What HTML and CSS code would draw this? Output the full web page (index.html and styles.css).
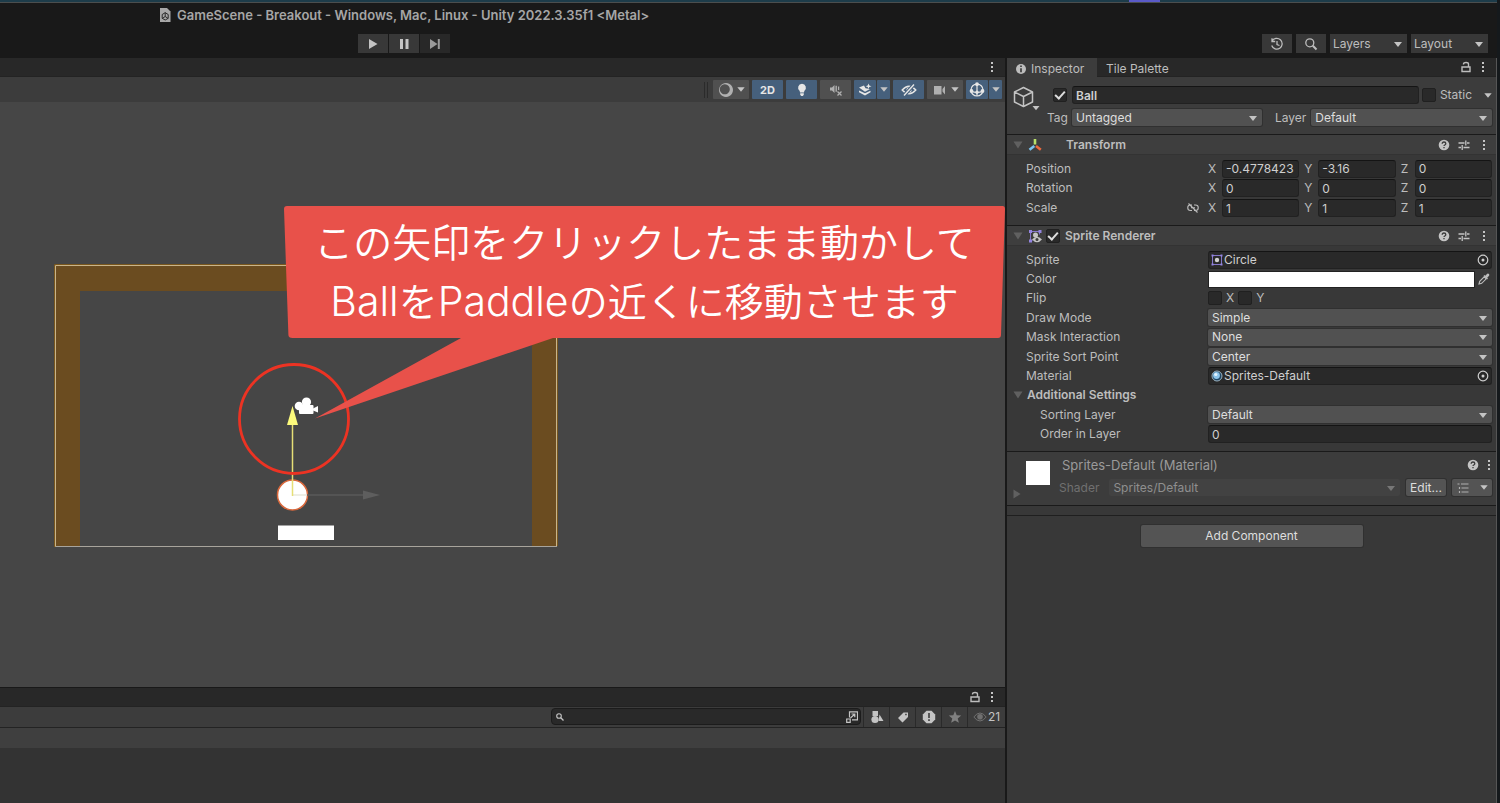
FILE: index.html
```html
<!DOCTYPE html>
<html lang="ja">
<head>
<meta charset="utf-8">
<title>GameScene - Breakout</title>
<link rel="stylesheet" href="styles.css">
</head>
<body>
<svg class="defs" aria-hidden="true">
  <symbol id="dots" viewBox="0 0 4 12"><rect x="1" y="1" width="2" height="2"/><rect x="1" y="5" width="2" height="2"/><rect x="1" y="9" width="2" height="2"/></symbol>
  <symbol id="lock" viewBox="0 0 10 12"><path d="M1 6h8v4.500h-8zM2.500 3.500v-.5q0-1.500 2.500-1.500t2.500 1.500v3" fill="none" stroke="currentColor" stroke-width="1.400"/></symbol>
  <symbol id="help" viewBox="0 0 12 12"><circle cx="6" cy="6" r="5.300"/><path d="M4.200 4.800q0-1.800 1.800-1.800t1.800 1.600q0 .9-1 1.400-.8.400-.8 1.100M6 8v1.300" fill="none" stroke="#3c3c3c" stroke-width="1.300"/></symbol>
  <symbol id="preset" viewBox="0 0 12 12"><path d="M.5 4h6M9 4h2.500M7.800 1.500v5M.5 8.500h2.500M5.500 8.500h6M4.200 6v5" fill="none" stroke="currentColor" stroke-width="1.300"/></symbol>
  <symbol id="target" viewBox="0 0 12 12"><circle cx="6" cy="6" r="4.800" fill="none" stroke="currentColor" stroke-width="1.200"/><circle cx="6" cy="6" r="1.500"/></symbol>
  <symbol id="tri" viewBox="0 0 8 5"><path d="M.3.2h7.400L4 4.800z"/></symbol>
  <symbol id="fold" viewBox="0 0 10 8"><path d="M.5.500h9L5 7.500z"/></symbol>
</svg>
<div class="app">
  <div class="desktop"><i></i></div>
  <header class="titlebar">
    <svg class="doc" viewBox="0 0 12 14"><path d="M1 0h7l3.500 3.500V14H1z" fill="#a8a8a8"/><path d="M6.200 4.500v4M6.200 8.500l-3 2M6.200 8.500l3 2M3.200 6.500v3.800l3 1.700 3-1.700V6.500l-3-1.800z" fill="none" stroke="#2a2a2a"/></svg>
    <h1>GameScene - Breakout - Windows, Mac, Linux - Unity 2022.3.35f1 &lt;Metal&gt;</h1>
  </header>
  <nav class="topbar">
    <div class="play">
      <button aria-label="Play"><svg viewBox="0 0 14 12"><path d="M3 1l8.500 5L3 11z"/></svg></button>
      <button aria-label="Pause"><svg viewBox="0 0 14 12"><path d="M3 1h3v10H3zM8.500 1h3v10h-3z"/></svg></button>
      <button aria-label="Step" class="dim"><svg viewBox="0 0 14 12"><path d="M2 1l7.500 5L2 11zM9.800 1h2v10h-2z"/></svg></button>
    </div>
    <div class="global">
      <button aria-label="History"><svg viewBox="0 0 14 14"><path d="M2 4.200A5.400 5.400 0 1 1 1.700 8.500M2 1.300v3.200h3.200M7 4v3.500l2.500 1" fill="none" stroke="currentColor" stroke-width="1.300"/></svg></button>
      <button aria-label="Search"><svg viewBox="0 0 14 14"><circle cx="5.800" cy="5.800" r="4" fill="none" stroke="currentColor" stroke-width="1.300"/><path d="M8.800 8.800l3.700 3.700" stroke="currentColor" stroke-width="2"/></svg></button>
      <span class="sel"><select aria-label="Layers"><option>Layers</option></select></span>
      <span class="sel"><select aria-label="Layout"><option>Layout</option></select></span>
    </div>
  </nav>
  <div class="workspace">
    <main class="left">
      <section class="scene-panel">
        <div class="tabs"><button class="ic end" aria-label="Scene menu"><svg class="dots"><use href="#dots"/></svg></button></div>
        <div class="scene-tools">
          <span class="grip"></span>
          <button class="w34" aria-label="Draw mode"><svg class="i16" viewBox="0 0 16 16"><path d="M8 1a7 7 0 1 0 .01 0M6.800 2.300a5 5 0 1 1-.01 0" fill-rule="evenodd"/></svg><svg class="tri"><use href="#tri"/></svg></button>
          <button class="on w31 two">2D</button>
          <button class="on w31" aria-label="Lighting"><svg class="i14" viewBox="0 0 14 14"><path d="M7 .8a4 4 0 0 1 2.300 7.200L9 9.500H5L4.700 8A4 4 0 0 1 7 .8zM5.200 10.200h3.600v1.500L7.800 13H6.200l-1-1.300z"/></svg></button>
          <button class="w31" aria-label="Audio"><svg class="i14" viewBox="0 0 14 14"><path d="M1 4.500h2L5.500 2v8L3 7.500H1zM6.500 2.800h1.400v6H6.500zM9 3.500h1.200V7H9z"/><path d="M8.500 8.500l4 4M12.500 8.500l-4 4" stroke="currentColor" stroke-width="1.300"/></svg></button>
          <span class="pair"><button class="on w22" aria-label="Effects"><svg class="i14" viewBox="0 0 14 14"><path d="M1 4.500l5-2 1.500 2.800 4.500.7-5 2.700zM1 7.500l6 2.800 5.500-2.600v1.600L7 12.500 1 9.300zM10.500.5l.8 2 2.200.7-2.200.8-.8 2-.8-2-2-.8 2-.7z"/></svg></button><button class="on w14" aria-label="Effects menu"><svg class="tri"><use href="#tri"/></svg></button></span>
          <button class="on w31" aria-label="Hidden objects"><svg class="i16" viewBox="0 0 16 14"><path d="M1.200 7Q8-.5 14.800 7 8 14.500 1.200 7z" fill="none" stroke="currentColor" stroke-width="1.400"/><circle cx="8" cy="7" r="2.600"/><path d="M3 12.500L13 1.500" stroke="#46607c" stroke-width="3.500"/><path d="M3 12.500L13 1.500" stroke="currentColor" stroke-width="1.400"/></svg></button>
          <button class="w34" aria-label="Camera"><svg class="i16" viewBox="0 0 16 14"><path d="M2 3h7.500v8.500H2zM10.500 6l2.500-3v8.500l-2.500-3z"/></svg><svg class="tri"><use href="#tri"/></svg></button>
          <span class="pair"><button class="on w22" aria-label="Gizmos"><svg class="i16" viewBox="0 0 16 16"><circle cx="8" cy="8" r="6" fill="none" stroke="currentColor" stroke-width="1.200"/><path d="M8 2v12M2 9q6 3 12 0" fill="none" stroke="currentColor" stroke-width="1.200"/><circle cx="8" cy="2.200" r="1.900"/><circle cx="2.500" cy="9" r="1.900"/><circle cx="13.500" cy="9" r="1.900"/><circle cx="8" cy="10.300" r="1.700"/></svg></button><button class="on w14" aria-label="Gizmos menu"><svg class="tri"><use href="#tri"/></svg></button></span>
        </div>
        <div class="canvas">
          <svg class="art" width="1005" height="585" viewBox="0 102 1005 585">
            <path d="M54 265h503v282h-25V291H80v256H54z" fill="#6b4c20"/>
            <path d="M55.500 546.500V265.500h501v281z" fill="none" stroke="#c9b489"/>
            <path d="M54.500 547V264.500h503V546" fill="none" stroke="#79571e"/>
            <path d="M56 546.500h501" stroke="#a8a49c"/>
            <circle cx="292.500" cy="495" r="15" fill="#fff" stroke="#d9683c" stroke-width="1.500"/>
            <path d="M307 495h56" stroke="#5a5a5a" stroke-width="1.500"/><path d="M292.500 495h14" stroke="#e8e8dc" stroke-width="1.500"/>
            <path d="M363 490.500l17 4.500-17 4.500z" fill="#5e5e5e"/>
            <path d="M292.500 496v-72" stroke="#e6df76" stroke-width="1.500"/>
            <path d="M292.500 406l5.500 19h-11z" fill="#fcfa7c"/>
            <rect x="278" y="525.500" width="56" height="14.500" fill="#fff"/>
            <circle cx="294" cy="419" r="54.500" fill="none" stroke="#ec3323" stroke-width="2.800"/>
            <g fill="#fff"><circle cx="299" cy="406" r="4.300"/><circle cx="306.500" cy="402" r="4.600"/><rect x="299" y="405" width="14.500" height="9" rx="1"/><path d="M313 408.500l5-2.500v6.500l-5-2z"/></g>
            <path d="M286.500 206H1002.500Q1005 206 1005 209L1001 335Q1000.900 338 998 338H553L315 418.500 461 338H292.500Q288.500 338 288.400 335L284 209Q284 206 287 206z" fill="#e8514a"/>
          </svg>
          <p class="callout">この矢印をクリックしたまま動かして<br><span>Ball</span>を<span>Paddle</span>の近くに移動させます</p>
        </div>
      </section>
      <section class="project">
        <div class="tabs"><button class="ic end" aria-label="Lock"><svg class="lock"><use href="#lock"/></svg></button><button class="ic" aria-label="Project menu"><svg class="dots"><use href="#dots"/></svg></button></div>
        <div class="project-tools">
          <label class="search"><svg viewBox="0 0 10 10"><circle cx="4" cy="4" r="2.300" fill="none" stroke="currentColor" stroke-width="1.100"/><path d="M5.800 5.800L8.500 8.500" stroke="currentColor" stroke-width="1.300"/></svg><input type="search" aria-label="Search project"><svg class="open" viewBox="0 0 12 12"><path d="M3.500 6.500V.8h8v8H6M.7 8h3.500v3.300H.7zM4.500 7l4-3.700M5.500 3h3.300v3.300" fill="none" stroke="currentColor" stroke-width="1.200"/></svg></label>
          <button aria-label="Search by type"><svg class="i14" viewBox="0 0 14 14"><path d="M2.500 1h5.500v5H2.500zM9.500 4.500l4 6.500H8.500z"/><circle cx="5" cy="9.500" r="3.600"/></svg></button>
          <button aria-label="Search by label"><svg class="i14" viewBox="0 0 14 14"><path fill-rule="evenodd" d="M2 8l5.500-5.500H12V7L6.500 12.500zM9.200 5.200h1.500V3.800H9.200z"/></svg></button>
          <button aria-label="Search by import log"><svg class="i14" viewBox="0 0 14 14"><path d="M4.500.8h5l3.700 3.700v5l-3.700 3.700h-5L.8 9.500v-5z"/><path d="M7 3v5M7 9.300V11" stroke="#3c3c3c" stroke-width="1.600"/></svg></button>
          <button aria-label="Favorites" class="grey"><svg class="i14" viewBox="0 0 14 14"><path d="M7 1l1.700 4.200 4.500.3-3.500 2.900 1.200 4.400L7 10.400l-3.900 2.400 1.200-4.400L.8 5.500l4.500-.3z"/></svg></button>
          <button class="count"><svg class="eye" viewBox="0 0 14 10"><path d="M.8 5Q7-3 13.200 5 7 13 .8 5z" fill="none" stroke="currentColor"/><circle cx="7" cy="4.700" r="2.800"/></svg>21</button>
        </div>
        <div class="crumbs"></div>
        <div class="files"></div>
      </section>
    </main>
    <aside class="inspector">
      <div class="tabs">
        <button class="tab active"><svg viewBox="0 0 12 12"><circle cx="6" cy="6" r="5"/><path d="M6 2.500v1.600M6 5.300v4" stroke="#3c3c3c" stroke-width="1.700"/></svg>Inspector</button>
        <button class="tab">Tile Palette</button>
        <button class="ic end" aria-label="Lock inspector"><svg class="lock"><use href="#lock"/></svg></button><button class="ic" aria-label="Inspector menu"><svg class="dots"><use href="#dots"/></svg></button>
      </div>
      <div class="object">
        <button class="cube" aria-label="Icon"><svg viewBox="0 0 28 26"><path d="M10.500 1.500l9 4.500v10l-9 4.500L1.500 16V6zM1.500 6l9 4.500L19.500 6M10.500 10.500v10" fill="none" stroke="currentColor" stroke-width="1.500" stroke-linejoin="round"/><path d="M19.500 20h7l-3.500 4.300z"/></svg></button>
        <div class="object-rows">
          <div class="line">
            <input type="checkbox" class="box active-box" checked aria-label="Active">
            <input type="text" class="field name" value="Ball" aria-label="Name">
            <label class="static"><input type="checkbox" class="box">Static</label>
            <svg class="tri static-tri"><use href="#tri"/></svg>
          </div>
          <div class="line second">
            <label for="tag">Tag</label><span class="sel tag"><select id="tag"><option>Untagged</option></select></span>
            <label for="layer" class="layer-label">Layer</label><span class="sel layer"><select id="layer"><option>Default</option></select></span>
          </div>
        </div>
      </div>
      <section>
        <div class="head"><svg class="fold"><use href="#fold"/></svg>
          <svg class="comp" viewBox="0 0 14 14"><path d="M7 1v5.500" stroke="#b9e06a" stroke-width="2.600"/><path d="M6.300 8L1.500 11.800" stroke="#7cc4f0" stroke-width="2.600"/><path d="M8 8l4.800 3.800" stroke="#ee6a3e" stroke-width="2.600"/></svg>
          <h2 class="pad">Transform</h2><svg class="h12"><use href="#help"/></svg><svg class="h12"><use href="#preset"/></svg><svg class="dots"><use href="#dots"/></svg></div>
        <div class="rows three">
          <div class="row"><span>Position</span><div class="vec"><label>X<input class="field" value="-0.4778423"></label><label>Y<input class="field" value="-3.16"></label><label>Z<input class="field" value="0"></label></div></div>
          <div class="row"><span>Rotation</span><div class="vec"><label>X<input class="field" value="0"></label><label>Y<input class="field" value="0"></label><label>Z<input class="field" value="0"></label></div></div>
          <div class="row"><span>Scale<svg class="link" viewBox="0 0 12 10"><path d="M5 2H3.500a2.500 2.500 0 0 0 0 5.500H5M7 2h1.500a2.500 2.500 0 0 1 0 5.500H7M4 4.800h4M1.500.5l9 9" fill="none" stroke="currentColor" stroke-width="1.100"/></svg></span><div class="vec"><label>X<input class="field" value="1"></label><label>Y<input class="field" value="1"></label><label>Z<input class="field" value="1"></label></div></div>
        </div>
      </section>
      <section>
        <div class="head"><svg class="fold"><use href="#fold"/></svg>
          <svg class="comp" viewBox="0 0 14 14"><path d="M2.500 2.500h9v3M2.500 2.500v9h2" fill="none" stroke="#8476c8"/><path d="M1 1h3v3H1zM10.500 1h3v3h-3zM1 10.500h3v3H1z" fill="#9485e0"/><circle cx="7.500" cy="6" r="2.500" fill="#c4c4c4"/><path d="M4 10.500q5-5.500 10 0-5 5.500-10 0z" fill="#c4c4c4"/><circle cx="9" cy="10.500" r="1.500" fill="#3c3c3c"/></svg>
          <input type="checkbox" class="box" checked aria-label="Enable Sprite Renderer"><h2>Sprite Renderer</h2><svg class="h12"><use href="#help"/></svg><svg class="h12"><use href="#preset"/></svg><svg class="dots"><use href="#dots"/></svg></div>
        <div class="rows ten">
          <div class="row"><span>Sprite</span><div class="field object-field"><svg viewBox="0 0 12 12"><path d="M1.500 1.500h9v9h-9z" fill="none" stroke="#8476c8"/><path d="M.5.500h2v2h-2zM9.500.500h2v2h-2zM.5 9.500h2v2h-2zM9.500 9.500h2v2h-2z" fill="#9485e0"/><circle cx="6" cy="6" r="2.200" fill="#d0d0d0"/></svg>Circle<button aria-label="Pick sprite"><svg><use href="#target"/></svg></button></div></div>
          <div class="row"><label for="col">Color</label><div class="color"><input id="col" type="color" value="#ffffff"><button aria-label="Eyedropper"><svg viewBox="0 0 12 12"><path d="M1 11l.7-2.700 4.500-4.500 2 2-4.500 4.500z" fill="none" stroke="currentColor" stroke-width="1.100"/><path d="M5.500 3l1-1 .8.800L9.200.8q1-.6 1.700.1t.2 1.800L9.200 4.700l.8.800-1 1z"/></svg></button></div></div>
          <div class="row"><span>Flip</span><div class="flip"><label><input type="checkbox" class="box">X</label><label><input type="checkbox" class="box">Y</label></div></div>
          <div class="row"><label for="dm">Draw Mode</label><span class="sel"><select id="dm"><option>Simple</option></select></span></div>
          <div class="row"><label for="mi">Mask Interaction</label><span class="sel"><select id="mi"><option>None</option></select></span></div>
          <div class="row"><label for="sp">Sprite Sort Point</label><span class="sel"><select id="sp"><option>Center</option></select></span></div>
          <div class="row"><span>Material</span><div class="field object-field"><svg viewBox="0 0 12 12"><circle cx="6" cy="6" r="5" fill="#1f4765" stroke="#9db4c2"/><circle cx="5.500" cy="5.500" r="3.400" fill="#8cc5ec"/><circle cx="4.800" cy="4.500" r="1.600" fill="#e4f4ff"/></svg>Sprites-Default<button aria-label="Pick material"><svg><use href="#target"/></svg></button></div></div>
          <h3><svg class="fold"><use href="#fold"/></svg>Additional Settings</h3>
          <div class="row sub"><label for="sl">Sorting Layer</label><span class="sel"><select id="sl"><option>Default</option></select></span></div>
          <div class="row sub"><label for="ol">Order in Layer</label><input id="ol" class="field" value="0"></div>
        </div>
      </section>
      <section class="material">
        <svg class="fold side" viewBox="0 0 8 10"><path d="M.5.500v9L7.500 5z"/></svg>
        <span class="swatch"></span>
        <div class="mat-body">
          <div class="mat-title"><span>Sprites-Default (Material)</span><svg class="h12"><use href="#help"/></svg><svg class="dots"><use href="#dots"/></svg></div>
          <div class="mat-line"><label for="sh">Shader</label><span class="sel off"><select id="sh" disabled><option>Sprites/Default</option></select></span><button class="btn edit">Edit...</button><button class="btn list" aria-label="Shader menu"><svg class="i12" viewBox="0 0 12 12"><path d="M.5 2h2M4 2h7.500M4.500 6h7M4.500 10h7M2.500 5v2M2.500 9v2" stroke="currentColor" stroke-width="1.200"/></svg><svg class="tri"><use href="#tri"/></svg></button></div>
        </div>
      </section>
      <div class="divider"></div>
      <div class="add"><button class="btn">Add Component</button></div>
    </aside>
  </div>
</div>
</body>
</html>
```
FILE: styles.css
```css
* { box-sizing: border-box; }
body { margin: 0; background: #191919; color: #bdbdbd; font: 12px/16px Inter, "Noto Sans CJK JP", sans-serif; }
button, input, select { margin: 0; padding: 0; border: 0; color: inherit; font: inherit; background: none; }
h1, h2, h3, p { margin: 0; font-size: 12px; }
svg { display: block; flex: none; fill: currentColor; }
.defs { position: absolute; width: 0; height: 0; }
.app { min-height: 100vh; display: flex; flex-direction: column; border-right: 3px solid #15191c; }
.desktop { height: 3px; background: #1d3c4a; border-bottom: 1px solid #4b4e4e; display: flex; padding-left: 1129px; }
.desktop i { width: 31px; background: #5a5ac8; }
.titlebar { height: 24px; display: flex; align-items: center; gap: 6px; padding-left: 159px; color: #a6a6a6; }
.titlebar h1 { font-weight: 600; font-size: 13px; white-space: nowrap; }
.doc { width: 12px; height: 14px; }
.topbar { height: 31px; display: flex; align-items: center; justify-content: space-between; padding: 2px 9px 0 358px; }
.topbar button { width: 30px; height: 19px; background: #383838; display: grid; place-items: center; }
.topbar button svg { width: 14px; height: 12px; }
.play { display: flex; gap: 1px; color: #c4c4c4; }
.play .dim { background: #282828; color: #999; }
.global { display: flex; gap: 4px; }
.global button svg { height: 14px; }
.global .sel { width: 77px; height: 19px; border-radius: 0; background: #383838; box-shadow: none; }

.sel { position: relative; display: block; height: 17px; border-radius: 2px; background: #515151; box-shadow: 0 0 0 1px #303030; }
.sel select { appearance: none; display: block; width: 100%; height: 100%; padding: 0 18px 0 4px; color: #dedede; opacity: 1; background: none; }
.sel::after { content: ""; position: absolute; right: 5px; top: 50%; margin-top: -2px; border: 4px solid transparent; border-top: 5px solid #c4c4c4; border-bottom: 0; pointer-events: none; }
.global .sel select { color: #bdbdbd; padding-left: 3px; }
.field { height: 18px; min-width: 0; padding: 0 3px; color: #cfcfcf; background: #292929; border: 1px solid #212121; border-top-color: #141414; border-radius: 3px; }
.box { appearance: none; width: 14px; height: 14px; flex: none; background: #292929; border: 1px solid #202020; border-radius: 2px; }
.box:checked { display: grid; place-items: center; }
.box:checked::before { content: ""; width: 8px; height: 4px; margin-top: -2px; border: solid #dedede; border-width: 0 0 2px 2px; transform: rotate(-48deg); }
.tri { width: 8px; height: 5px; color: #c4c4c4; }
.i12 { width: 12px; height: 12px; } .i14 { width: 14px; height: 14px; } .i16 { width: 16px; height: 16px; }
.dots { width: 4px; height: 12px; color: #c4c4c4; }
.lock { width: 10px; height: 12px; }

.workspace { flex: 1; display: flex; gap: 2px; }
.left { flex: 1; min-width: 0; display: flex; flex-direction: column; gap: 1px; }
.tabs { height: 19px; display: flex; align-items: center; background: #282828; border-bottom: 1px solid #232323; }
.left .tabs { padding-right: 11px; }
.ic { margin-left: 10px; height: 12px; }
.end { margin-left: auto; }
.scene-panel { flex: 1; display: flex; flex-direction: column; }
.scene-tools { height: 25px; display: flex; align-items: center; justify-content: flex-end; gap: 3px; padding-right: 3px; background: #3c3c3c; }
.scene-tools button { height: 19px; display: flex; align-items: center; justify-content: center; gap: 3px; background: #505050; color: #b0b0b0; border-radius: 1px; }
.scene-tools .on { background: #46607c; color: #e6e6e6; }
.scene-tools .two { font-size: 11px; font-weight: 700; }
.grip { width: 4px; height: 16px; margin-right: 2px; border: solid #2b2b2b; border-width: 0 1px; }
.w34 { width: 36px; } .w31 { width: 31px; } .w22 { width: 22px; } .w14 { width: 13px; }
.pair { display: flex; gap: 1px; }
.canvas { position: relative; flex: 1; background: #464646; }
.art { position: absolute; left: 0; top: 0; }
.callout { position: absolute; left: 284px; top: 111px; width: 721px; text-align: center; color: #fff; font: 350 39px/59px Inter, "Noto Sans CJK JP", sans-serif; white-space: nowrap; }
.callout span { font-size: 41px; font-weight: 300; line-height: 40px; }
.project { display: flex; flex-direction: column; }
.project-tools { height: 21px; display: flex; justify-content: flex-end; background: #3c3c3c; border-bottom: 1px solid #232323; color: #c4c4c4; }
.project-tools button { width: 26px; height: 20px; display: flex; align-items: center; justify-content: center; border-left: 1px solid #2a2a2a; }
.project-tools .grey { color: #808080; }
.project-tools .count { width: 38px; gap: 1px; }
.eye { width: 14px; height: 10px; color: #707070; }
.search { width: 310px; height: 17px; margin: 1px 2px 0 0; padding: 0 2px 0 3px; display: flex; align-items: center; gap: 3px; background: #292929; border: 1px solid #1c1c1c; border-radius: 4px; }
.search svg { width: 10px; height: 10px; }
.search .open { width: 12px; height: 12px; }
.search input { flex: 1; min-width: 0; height: 14px; appearance: none; }
.crumbs { height: 20px; background: #3f3f3f; }
.files { height: 55px; background: #333; }

.inspector { width: 490px; background: #383838; border-right: 1px solid #565656; }
.tab { height: 19px; padding: 3px 9px 0; display: flex; align-items: center; gap: 4px; }
.tab svg { width: 12px; height: 12px; }
.tab.active { width: 90px; padding-left: 8px; background: #3c3c3c; }
.inspector .tabs { padding-right: 11px; }
.object { display: flex; height: 58px; padding: 9px 4px 0 6px; gap: 6px; background: #3c3c3c; border-bottom: 1px solid #1a1a1a; }
.cube { width: 28px; height: 26px; color: #c4c4c4; }
.cube svg { width: 28px; height: 26px; }
.object-rows { flex: 1; display: flex; flex-direction: column; gap: 5px; }
.line { display: flex; align-items: center; height: 18px; }
.active-box { margin: 0 5px 0 6px; }
.name { flex: 1; font-weight: 600; }
.static { display: flex; align-items: center; gap: 4px; margin-left: 3px; }
.static-tri { margin-left: 12px; }
.second { height: 17px; }
.second label { padding-right: 4px; }
.tag { width: 190px; }
.second .layer-label { margin-left: 13px; padding-right: 5px; }
.layer { flex: 1; }
.head { display: flex; align-items: center; height: 20px; padding: 0 10px 0 6px; background: #3e3e3e; border-bottom: 1px solid #333; }
.head h2 { flex: 1; margin-left: 5px; font-weight: 600; }
.head h2.pad { margin-left: 24px; }
.head .box { margin-left: 4px; }
.fold { width: 10px; height: 8px; color: #606060; }
.comp { width: 14px; height: 14px; margin-left: 5px; }
.h12 { width: 12px; height: 12px; margin-right: 8px; color: #c4c4c4; }
.head .h12 + .dots { margin-left: 4px; }
.rows { display: grid; grid-auto-rows: 1fr; align-items: center; padding: 0 4px 0 19px; }
.three { height: 71px; padding-top: 4px; padding-bottom: 7px; border-bottom: 1px solid #1a1a1a; }
.ten { height: 206px; padding-top: 4px; padding-bottom: 7px; border-bottom: 1px solid #1a1a1a; }
.row { display: grid; grid-template-columns: 182px 1fr; align-items: center; }
.row > span:first-child { display: flex; align-items: center; justify-content: space-between; padding-right: 9px; }
.link { width: 12px; height: 10px; }
.sub > label { padding-left: 14px; }
.vec { display: grid; grid-template-columns: repeat(3, 1fr); gap: 5px; }
.vec label { display: grid; grid-template-columns: 14px 1fr; align-items: center; }
.vec input { width: 100%; }
.object-field { display: flex; align-items: center; gap: 1px; padding: 0 2px; }
.object-field svg { width: 12px; height: 12px; }
.object-field button { margin-left: auto; }
.color { display: flex; height: 17px; }
.color input { appearance: none; flex: 1; height: 17px; border: 1px solid #222; }
.color input::-webkit-color-swatch-wrapper { padding: 0; }
.color input::-webkit-color-swatch { border: 0; }
.color button { width: 17px; display: grid; place-items: center; }
.color svg { width: 12px; height: 12px; }
.flip, .flip label { display: flex; align-items: center; gap: 4px; }
h3 { display: flex; align-items: center; gap: 4px; margin-left: -13px; font-weight: 600; }
.material { display: flex; height: 54px; background: #3c3c3c; border-bottom: 1px solid #1a1a1a; padding: 5px 4px 0 6px; }
.side { width: 8px; height: 10px; margin-top: 32px; }
.swatch { width: 24px; height: 24px; margin: 4px 9px 0 5px; background: #fff; }
.mat-body { flex: 1; color: #9a9a9a; }
.mat-title { display: flex; align-items: center; height: 16px; padding: 0 1px 0 3px; }
.mat-title span { flex: 1; font-size: 13px; }
.mat-line { display: flex; align-items: center; height: 17px; margin-top: 6px; color: #707070; }
.mat-line .off { flex: 1; margin: 0 6px 0 10px; background: #424242; box-shadow: none; }
.off select { color: #8f8f8f; }
.off::after { border-top-color: #777; }
.btn { height: 17px; color: #dedede; background: #545454; border-radius: 2px; box-shadow: 0 0 0 1px #303030; }
.edit { width: 40px; }
.list { width: 40px; margin-left: 6px; display: flex; align-items: center; justify-content: center; gap: 11px; }
.list .i12 { color: #b0b0b0; }
.divider { height: 10px; border-bottom: 1px solid #1f1f1f; }
.add { display: flex; justify-content: center; padding-top: 9px; }
.add .btn { width: 222px; height: 22px; }
```
